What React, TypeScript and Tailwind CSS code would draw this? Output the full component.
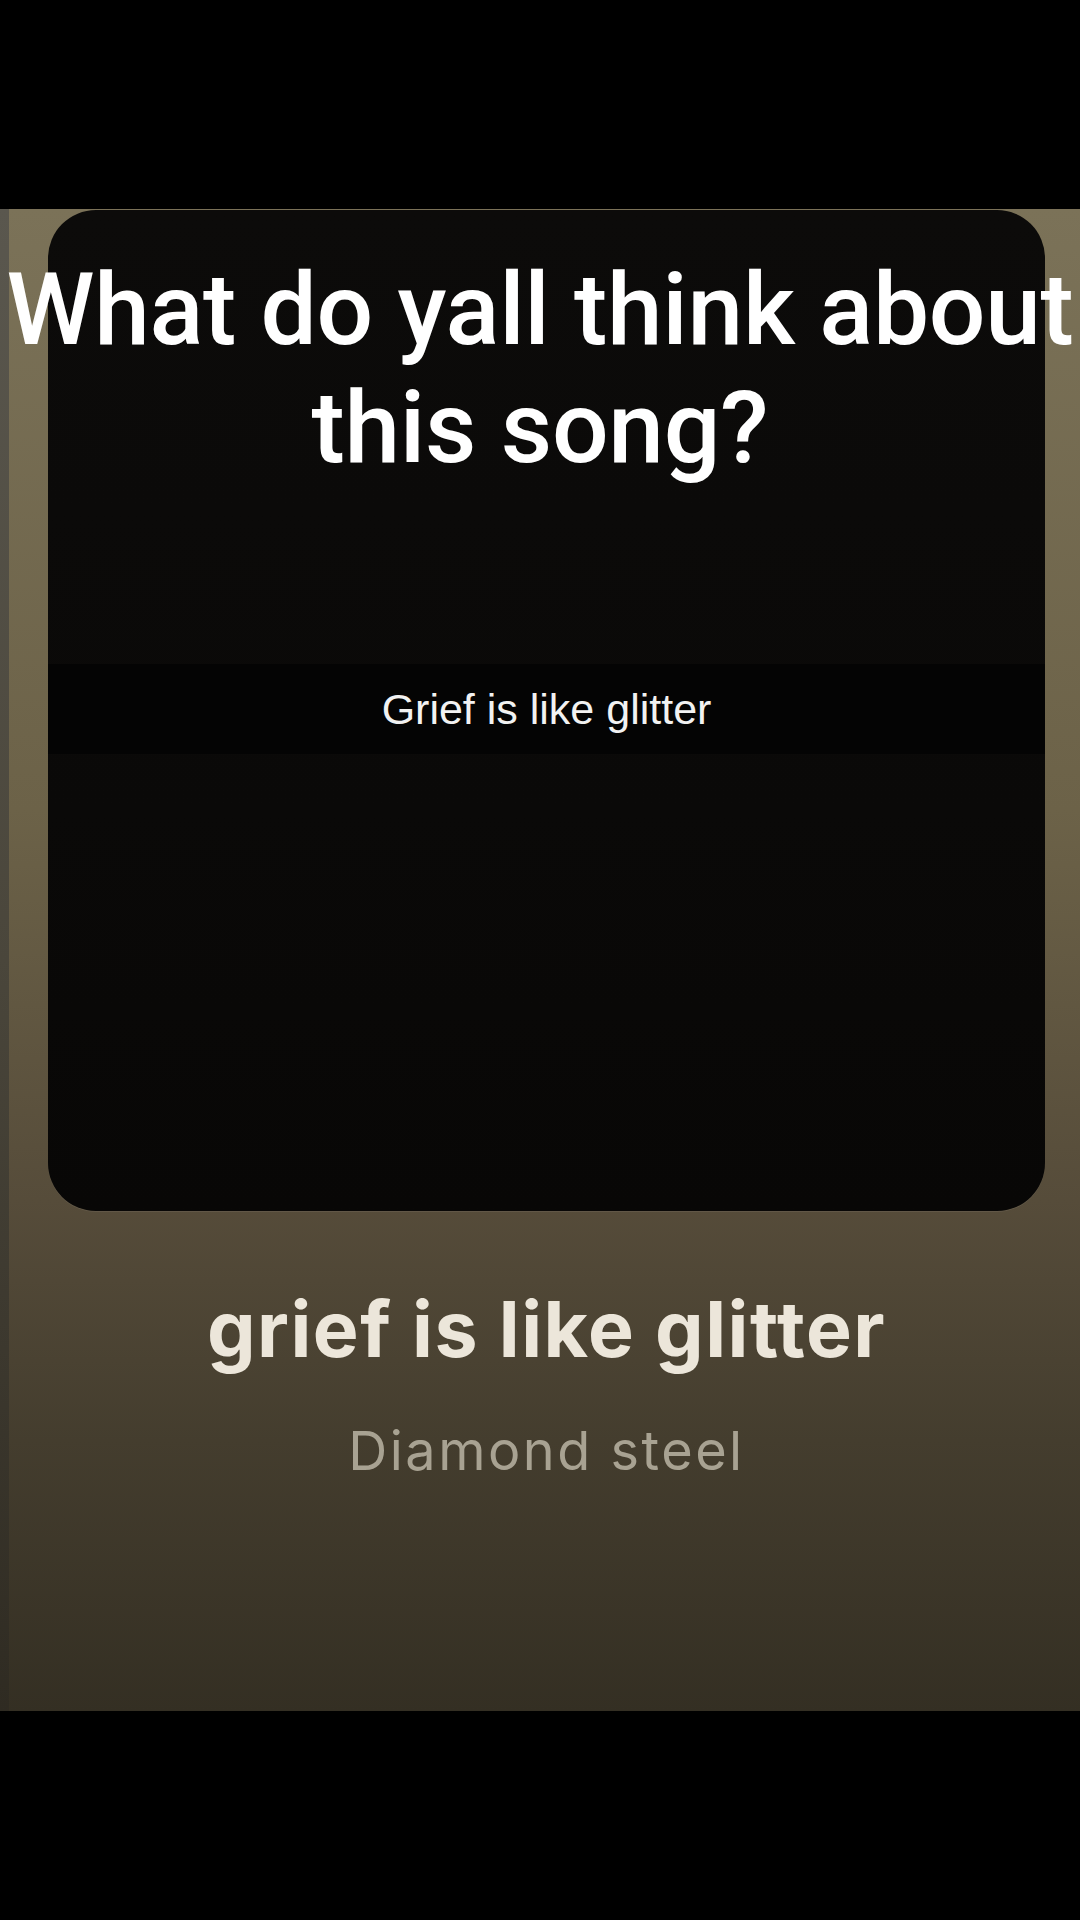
export default function App() {
  return (
    <div className="relative w-[1080px] h-[1920px] bg-black overflow-hidden flex flex-col">
      <div className="h-[209px] bg-black" />

      {/* now playing panel */}
      <div className="h-[1502px] flex bg-[linear-gradient(180deg,#7b7258_0%,#6c6248_40%,#564c3a_66%,#443d2e_82%,#342f23_100%)]">
        <div className="w-[9px] bg-[linear-gradient(180deg,#5a574e_0%,#4a463b_50%,#2f2b22_100%)]" />
        <div className="flex-1 flex flex-col items-start">
          <div className="ml-[39px] mt-px w-[997px] h-[1001px] rounded-[48px] bg-[linear-gradient(180deg,#0c0b0a_0%,#0a0908_60%,#080706_100%)] shadow-[0_1px_0_rgba(120,112,96,0.35)] flex flex-col">
            <div className="h-[454px]" />
            <div className="h-[90px] bg-[#040404] flex items-center justify-center">
              <span className="text-[43px] text-[#f2f2f2] font-['Liberation_Sans',Arial,sans-serif]">
                Grief is like glitter
              </span>
            </div>
          </div>

          <div className="ml-[39px] w-[997px] mt-[72px] flex flex-col items-center font-['Inter',sans-serif]">
            <div className="text-[77px] leading-[92px] font-bold tracking-[1.5px] text-[#ece6da]">grief is like glitter</div>
            <div className="mt-[43px] text-[54px] leading-[65px] tracking-[2.5px] text-[#a8a292]">Diamond steel</div>
          </div>
        </div>
      </div>

      <div className="flex-1 bg-black" />

      {/* caption overlay */}
      <div className="absolute left-0 right-0 top-[251px] text-center text-white text-[100px] leading-[118px] font-medium tracking-[-0.3px] font-['Roboto',sans-serif]">
        <div>What do yall think about</div>
        <div>this song?</div>
      </div>
    </div>
  );
}
